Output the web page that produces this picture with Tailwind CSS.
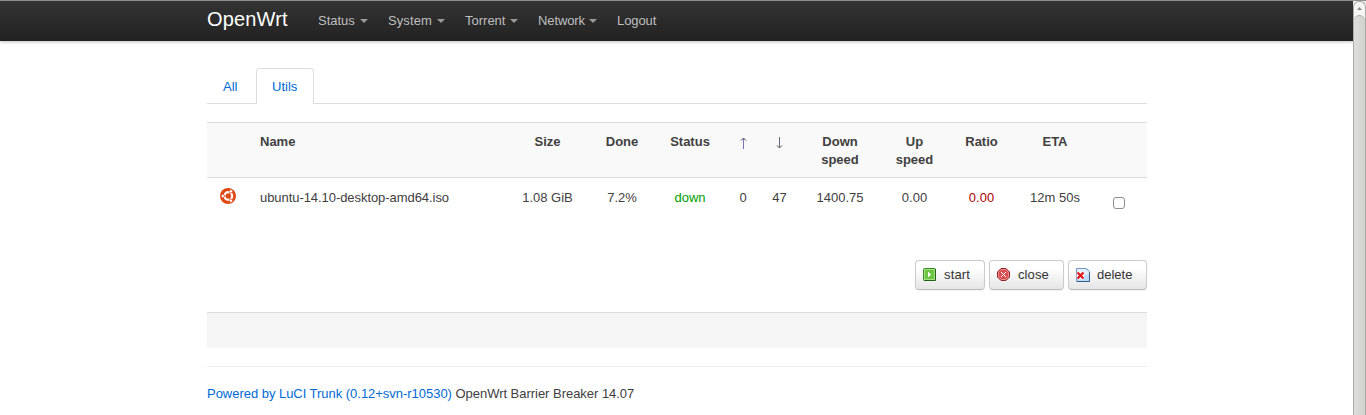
<!DOCTYPE html>
<html lang="en">
<head>
<meta charset="utf-8">
<title>OpenWrt - Torrent</title>
<script src="https://cdn.jsdelivr.net/npm/@tailwindcss/browser@4"></script>
</head>
<body class="flex h-[415px] overflow-hidden bg-white font-['Liberation_Sans',Arial,sans-serif] text-[13px] leading-[18px] text-[#404040]">
<div class="w-[1353px] shrink-0">
  <header class="h-[41px] border-t border-[#8e8f8d] bg-linear-to-b from-[#333] to-[#222] shadow-[0_1px_3px_rgba(0,0,0,0.25)]">
    <nav class="ml-[207px] flex h-10 items-center text-[#bfbfbf]">
      <a class="w-[111px] pb-[5px] text-[20px] leading-5 tracking-[0.15px] text-white">OpenWrt</a>
      <a class="flex w-[70px] items-center gap-[5px]">Status <svg width="8" height="4" fill="#999"><path d="M0 0h8L4 4z"/></svg></a>
      <a class="flex w-[77px] items-center gap-[5px]"><span class="tracking-[0.1px]">System</span> <svg width="8" height="4" fill="#999"><path d="M0 0h8L4 4z"/></svg></a>
      <a class="flex w-[73px] items-center gap-[5px]">Torrent <svg width="8" height="4" fill="#999"><path d="M0 0h8L4 4z"/></svg></a>
      <a class="flex w-[79px] items-center gap-1"><span class="tracking-[-0.1px]">Network</span> <svg width="8" height="4" fill="#999"><path d="M0 0h8L4 4z"/></svg></a>
      <a class="tracking-[-0.1px]">Logout</a>
    </nav>
  </header>
  <main class="ml-[207px] w-[940px] pt-[27px]">
    <div class="flex h-9 border-b border-[#ddd] text-[#0069d6]">
      <a class="w-[49px] pt-[10px] pl-4">All</a>
      <a class="h-9 w-[58px] rounded-t border border-b-0 border-[#ddd] bg-white pt-[9px] pl-[15px]">Utils</a>
    </div>
    <table class="mt-[18px] w-full table-fixed border-collapse text-center">
      <colgroup><col class="w-[43px]"><col class="w-[259px]"><col class="w-[77px]"><col class="w-[72px]"><col class="w-[64px]"><col class="w-[42px]"><col class="w-[31px]"><col class="w-[90px]"><col class="w-[59px]"><col class="w-[75px]"><col class="w-[72px]"><col class="w-[56px]"></colgroup>
      <thead>
        <tr class="h-[55px] border-y border-[#ddd] bg-[#f9f9f9] align-top *:pt-[10px] *:font-bold">
          <th></th><th class="pl-[10px] text-left">Name</th><th>Size</th><th>Done</th><th>Status</th>
          <th><svg class="mx-auto mt-[4px]" width="7" height="12" fill="none"><path d="M3.500 12V2" stroke="#7474bc"/><path d="M1 3.500L3.500 1L6 3.500" stroke="#44445c"/></svg></th>
          <th><svg class="mx-auto mt-[4px]" width="7" height="12" fill="none"><path d="M3.500 0v10" stroke="#66668c"/><path d="M1 8.500L3.500 11L6 8.500" stroke="#505044"/></svg></th>
          <th>Down<br>speed</th><th>Up<br>speed</th><th>Ratio</th><th>ETA</th><th></th>
        </tr>
      </thead>
      <tbody>
        <tr class="h-[82px] align-top *:pt-[11px]">
          <td><svg class="relative -top-px mr-[14px] ml-[13px]" width="16" height="16" viewBox="0 0 16 16"><circle cx="8" cy="8" r="8" fill="#dd4814"/><circle cx="8.3" cy="8" r="3.8" fill="none" stroke="#fff" stroke-width="2.2"/><path d="M5.500 8H3M9.700 5.600l1.300-2.300M9.700 10.400l1.300 2.300" stroke="#dd4814"/><g fill="#fff" stroke="#dd4814" stroke-width=".7"><circle cx="2.8" cy="8" r="1.700"/><circle cx="10.9" cy="3.3" r="1.700"/><circle cx="10.9" cy="12.7" r="1.700"/></g></svg></td>
          <td class="pl-[10px] text-left tracking-[-0.06px]">ubuntu-14.10-desktop-amd64.iso</td><td>1.08 GiB</td><td>7.2%</td><td class="text-[#00a000]">down</td><td>0</td><td>47</td><td>1400.75</td><td>0.00</td><td class="text-[#b00000]">0.00</td><td>12m 50s</td>
          <td><input type="checkbox" aria-label="Select torrent" class="mx-auto mt-[8px] block h-3 w-3 appearance-none rounded-[3px] border border-[#8f8f8f] bg-white"></td>
        </tr>
      </tbody>
    </table>
    <div class="flex h-[30px] justify-end gap-1 *:flex *:items-center *:rounded *:border *:border-[#ccc] *:border-b-[#bbb] *:bg-linear-to-b *:from-white *:from-25% *:to-[#e6e6e6] *:text-[#333] *:shadow-[0_1px_2px_rgba(0,0,0,0.05)]">
      <button class="w-[70px] pl-[7px]"><svg class="mr-2 shrink-0" width="13" height="13"><rect x=".5" y=".5" width="12" height="12" rx="1" fill="#6cc644" stroke="#3b8a27"/><path d="M12.500 1v11.500H1" fill="none" stroke="#23601a"/><rect x="1.5" y="1.5" width="10" height="10" fill="none" stroke="#a5e184"/><path d="M5 4v5h1V8h1V7h1V6H7V5H6V4z" fill="#fff"/></svg><span class="tracking-[0.15px]">start</span></button>
      <button class="w-[75px] pl-[7px]"><svg class="mr-2 shrink-0" width="13" height="13"><path d="M4 .5h5L12.500 4v5L9 12.500H4L.5 9V4z" fill="#d95052" stroke="#8c2727"/><path d="M4.300 1.500h4.400l2.800 2.800v4.400l-2.800 2.800H4.300L1.500 8.700V4.300z" fill="none" stroke="#ee8c8a"/><path d="M4 4l5 5M9 4L4 9" stroke="#fff"/></svg><span class="tracking-[0.1px]">close</span></button>
      <button class="w-[79px] pl-[7px]"><svg class="mr-[7px] shrink-0" width="14" height="14"><path d="M.5 .5h10l3 3v10H.5z" fill="#b9dcfb" stroke="#7796c5"/><path d="M1 1h9v2h3v3L1 9z" fill="#e0f1ff"/><path d="M13.500 4v9.500H1" fill="none" stroke="#3e5988"/><path d="M1.500 4.500l6 6M7.500 4.500l-6 6" stroke="#fff" stroke-width="4"/><path d="M1.500 4.500l6 6M7.500 4.500l-6 6" stroke="#e0161c" stroke-width="2.300"/></svg>delete</button>
    </div>
    <div class="mt-[22px] h-9 rounded-b-[3px] border-t border-[#ddd] bg-[#f5f5f5]"></div>
    <footer class="mt-[18px] border-t border-[#eee] pt-[18px] tracking-[-0.03px]"><a class="text-[#0069d6]">Powered by LuCI Trunk (0.12+svn-r10530)</a> OpenWrt Barrier Breaker 14.07</footer>
  </main>
</div>
<aside class="h-full w-[13px] border-t border-[#8e8f8d] bg-[#eee]">
  <div class="flex h-[415px] flex-col rounded-t-[6px] border-x border-t border-[#aaa9a5] bg-[#f5f5f4]">
    <svg class="mx-auto my-[5px] shrink-0" width="5" height="3" fill="#888"><path d="M0 3h5L2.500 0z"/></svg>
    <div class="flex-1 rounded-t-[6px] border-t border-[#aaa9a5] bg-linear-to-r from-[#dededc] to-[#d1d1ce]"></div>
  </div>
</aside>
</body>
</html>
